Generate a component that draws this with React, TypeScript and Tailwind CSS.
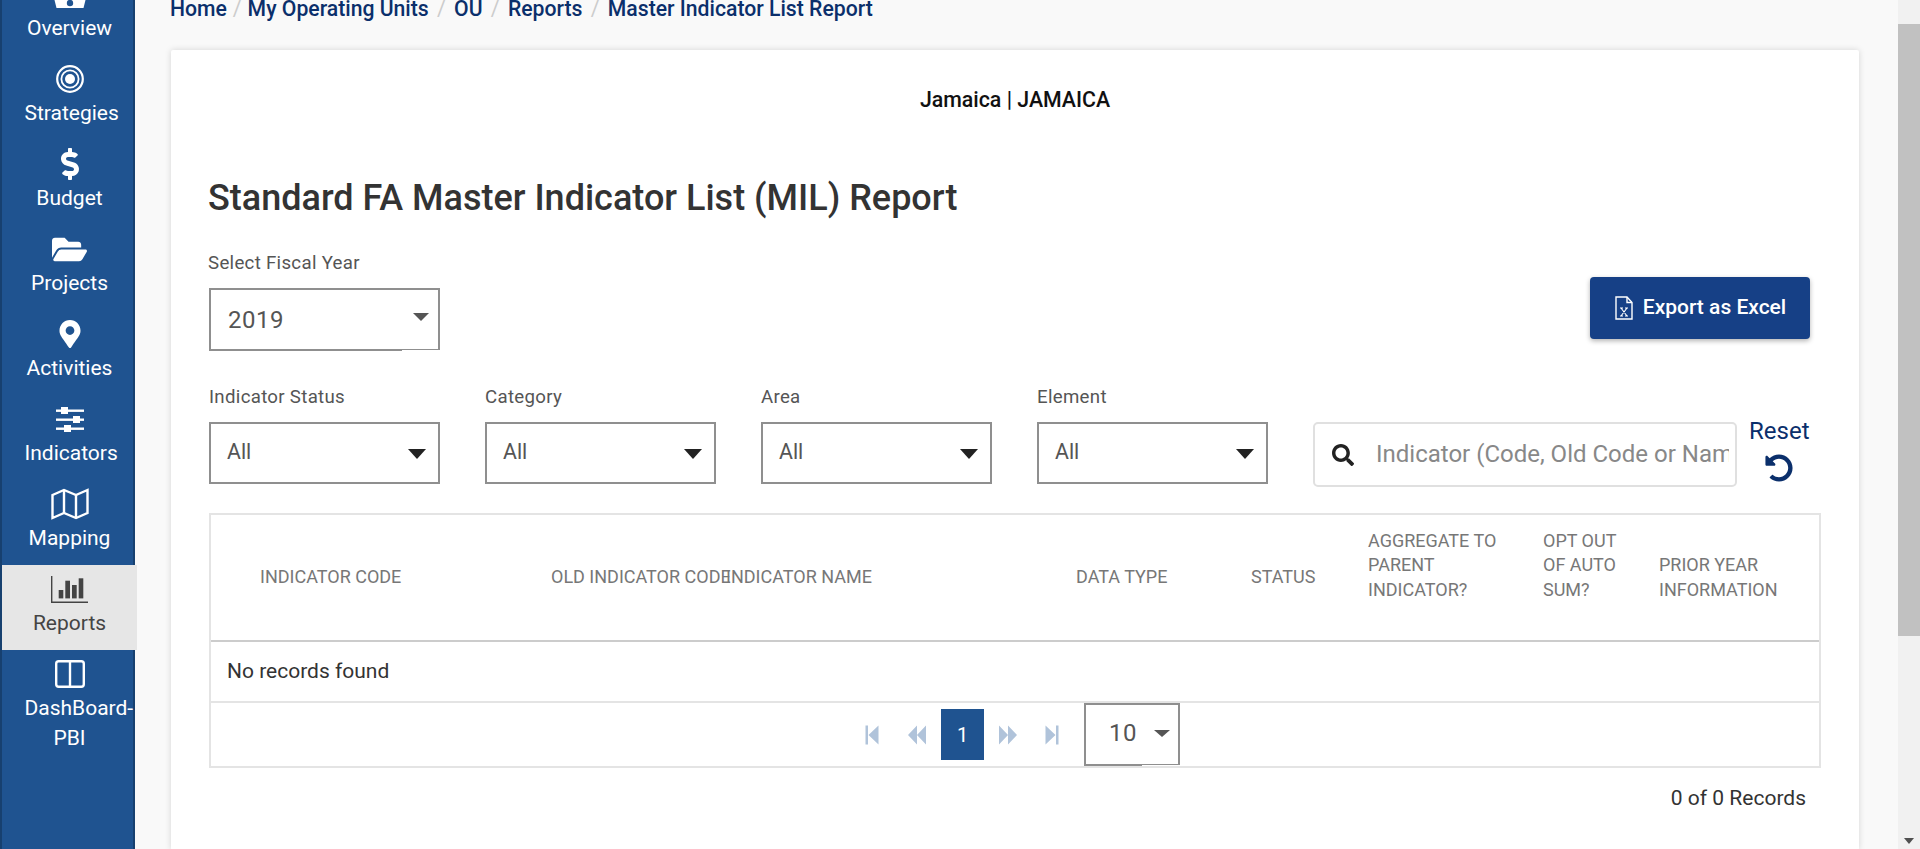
import { FaDollarSign, FaFolderOpen, FaMapMarkerAlt, FaSearch, FaUndoAlt } from "react-icons/fa";
import type { ReactNode } from "react";

const font = { fontFamily: "Roboto, sans-serif" };

const BullseyeIcon = () => (
  <svg viewBox="0 0 28 28" className="w-7 h-7" fill="none" stroke="white">
    <circle cx="14" cy="14" r="12.8" strokeWidth="2.2" />
    <circle cx="14" cy="14" r="8.6" strokeWidth="1.8" />
    <circle cx="14" cy="14" r="5" fill="white" stroke="none" />
  </svg>
);

const SlidersIcon = () => (
  <svg viewBox="0 0 28 25" className="w-7 h-[25px]" fill="white">
    <rect x="0" y="2.5" width="28" height="2.4" />
    <rect x="5" y="0" width="7" height="7" />
    <rect x="0" y="11.5" width="28" height="2.4" />
    <rect x="17" y="9" width="7" height="7" />
    <rect x="0" y="20.5" width="28" height="2.4" />
    <rect x="8" y="18" width="7" height="7" />
  </svg>
);

const MapIcon = () => (
  <svg viewBox="0 0 38 32" className="w-[38px] h-8" fill="none" stroke="white" strokeWidth="2.4">
    <path d="M1.5 7L13 2l12 5 11.5-5v23L25 30l-12-5L1.5 30z" />
    <path d="M13 2v23M25 7v23" />
  </svg>
);

const ChartIcon = () => (
  <svg viewBox="0 0 37 27" className="w-[37px] h-[27px]" fill="#444">
    <rect x="0" y="0" width="1.4" height="27" />
    <rect x="0" y="25.5" width="37" height="1.5" />
    <rect x="7.7" y="14" width="4.6" height="8.4" />
    <rect x="14.3" y="4.7" width="4.7" height="17.7" />
    <rect x="21" y="9" width="4.7" height="13.4" />
    <rect x="27.7" y="2.3" width="4.6" height="20.1" />
  </svg>
);

const ColumnsIcon = () => (
  <svg viewBox="0 0 30 28" className="w-[30px] h-7" fill="none" stroke="white" strokeWidth="2.4">
    <rect x="1.2" y="1.2" width="27.6" height="25.6" rx="2.5" />
    <line x1="15" y1="1.2" x2="15" y2="26.8" />
  </svg>
);

const OverviewIcon = () => (
  <svg viewBox="0 0 34 28" className="w-[34px] h-7" fill="white">
    <path d="M7 0h20l7 14-2 8-1.5 6H3.5L2 22 0 14z" />
    <circle cx="17" cy="23" r="3.2" fill="#1f5390" />
  </svg>
);

const ExcelIcon = () => (
  <svg viewBox="0 0 20 24" className="w-5 h-6" fill="none" stroke="white" strokeWidth="1.4">
    <path d="M2 1h11l5 5.5V23H2z" />
    <path d="M13 1v5.5h5" />
    <path d="M7 12l6 8M13 12l-6 8M6 12h3M11 12h3M6 20h3M11 20h3" strokeWidth="1.1" />
  </svg>
);

const NAV: { label: ReactNode; icon: ReactNode; active?: boolean }[] = [
  { label: "Overview", icon: <OverviewIcon /> },
  { label: "Strategies", icon: <BullseyeIcon /> },
  { label: "Budget", icon: <FaDollarSign className="text-[32px]" /> },
  { label: "Projects", icon: <FaFolderOpen className="text-[35px]" /> },
  { label: "Activities", icon: <FaMapMarkerAlt className="text-[28px]" /> },
  { label: "Indicators", icon: <SlidersIcon /> },
  { label: "Mapping", icon: <MapIcon /> },
  { label: "Reports", icon: <ChartIcon />, active: true },
  { label: "DashBoard-PBI", icon: <ColumnsIcon /> },
];

const Crumbs = ["Home", "My Operating Units", "OU", "Reports", "Master Indicator List Report"];

const Dropdown = ({ label }: { label: string }) => (
  <div className="w-[231px]">
    <div className="text-[18.67px] leading-[22px] tracking-[0.3px] text-[#555]">{label}</div>
    <div className="mt-[14px] h-[62px] border-2 border-[#8f8f8f] flex items-center justify-between pl-[16px] pr-[12px]">
      <span className="text-[21.33px] text-[#555] -mt-[2px]">All</span>
      <span className="w-0 h-0 border-x-[9px] border-x-transparent border-t-[10px] border-t-[#222] mt-[2px]" />
    </div>
  </div>
);

const Tri = ({ points }: { points: string }) => (
  <svg viewBox="0 0 20 20" className="w-5 h-5" fill="#b0c3da">
    <path d={points} />
  </svg>
);

export default function App() {
  return (
    <div className="flex h-[849px] overflow-hidden bg-[#f9f9f9]" style={font}>
      <aside className="w-[135px] shrink-0 bg-[#1f5390] border-x-2 border-[#17406f] -mt-[30px] text-white">
        {NAV.map((n, i) => (
          <div
            key={i}
            className={`relative w-[135px] h-[85px] flex flex-col items-center pt-[10px] text-center ${n.active ? "bg-[#e6e6e6] text-[#444]" : ""}`}
          >
            <div className="h-[28px] flex items-center justify-center">{n.icon}</div>
            <div className="text-[21px] leading-[30px] mt-[5px] w-[90px]">{n.label}</div>
          </div>
        ))}
      </aside>

      <main className="flex-1 min-w-0 pl-[36px] pr-[39px] -mt-[4px]">
        <nav className="h-[54px] -ml-[1px] flex items-start text-[21.2px] leading-[26px] font-medium text-[#0b2f6b]">
          {Crumbs.map((c, i) => (
            <span key={c} className="flex">
              {i > 0 && (
                <span className={`text-[#ccc] font-normal ${i === 1 ? "px-[6px]" : "px-[8.3px]"}`}>/</span>
              )}
              {c}
            </span>
          ))}
        </nav>

        <section className="bg-white shadow-[0_0_6px_rgba(0,0,0,0.15)] rounded-[2px] h-[800px] px-[38px] pt-[37px]">
          <div className="text-center text-[21.33px] leading-[26px] font-medium text-[#111]">Jamaica | JAMAICA</div>

          <h1 className="mt-[63px] -ml-[1px] text-[36px] leading-[44px] font-medium text-[#333]">
            Standard FA Master Indicator List (MIL) Report
          </h1>

          <div className="flex justify-between items-start mt-[32px]">
            <div>
              <div className="-ml-[1px] text-[18.67px] leading-[22px] tracking-[0.3px] text-[#555]">Select Fiscal Year</div>
              <div className="relative mt-[14px] w-[231px] h-[63px] border-2 border-[#8f8f8f] flex items-center justify-between pl-[17px] pr-[9px]">
                <span className="text-[24px] tracking-[0.5px] text-[#555]">2019</span>
                <span className="w-0 h-0 border-x-[8px] border-x-transparent border-t-[8px] border-t-[#555] -mt-[6px]" />
                <span className="absolute -bottom-[2px] -right-[2px] w-[38px] h-px bg-white" />
              </div>
            </div>
            <button className="mt-[25px] mr-[11px] w-[220px] h-[62px] bg-[#164086] rounded-[4px] shadow-[0_2px_5px_rgba(0,0,0,0.3)] text-white text-[21px] font-medium flex items-center justify-center gap-[9px]">
              <ExcelIcon />
              Export as Excel
            </button>
          </div>

          <div className="flex items-start mt-[35px]">
            <div className="flex gap-[45px]">
              {["Indicator Status", "Category", "Area", "Element"].map((l) => (
                <Dropdown key={l} label={l} />
              ))}
            </div>
            <div className="ml-[45px] mt-[36px] w-[424px] h-[65px] border-2 border-[#e0e0e0] rounded-[5px] flex items-center pl-[17px] pr-[6px]">
              <FaSearch className="text-[22px] text-[#222] shrink-0" />
              <div className="ml-[22px] -mt-[1px] text-[24px] text-[#888] whitespace-nowrap overflow-hidden">
                Indicator (Code, Old Code or Name)
              </div>
            </div>
            <div className="ml-[12px] mt-[31px] text-[#0b2f6b] flex flex-col items-center">
              <span className="text-[24px] leading-[28px]">Reset</span>
              <FaUndoAlt className="text-[28px] mt-[9px]" />
            </div>
          </div>

          <div className="mt-[26px] w-[1612px] border-2 border-[#e4e4e4]">
            <div className="h-[127px] grid grid-cols-[340px_175px_350px_175px_117px_175px_116px_1fr] items-center border-b-2 border-[#ccc] text-[18px] leading-[24.5px] text-[#777]">
              <div className="pl-[49px]">INDICATOR CODE</div>
              <div className="whitespace-nowrap">OLD INDICATOR CODE</div>
              <div>INDICATOR NAME</div>
              <div>DATA TYPE</div>
              <div>STATUS</div>
              <div className="pb-[24.5px]">AGGREGATE TO<br />PARENT<br />INDICATOR?</div>
              <div className="pb-[24.5px]">OPT OUT<br />OF AUTO<br />SUM?</div>
              <div>PRIOR YEAR<br />INFORMATION</div>
            </div>
            <div className="h-[61px] flex items-center pl-[16px] border-b-2 border-[#e4e4e4] text-[21px] text-[#333]">
              No records found
            </div>
            <div className="h-[63px] flex items-center justify-center pl-[12px]">
              <div className="flex items-center gap-[25px]">
                <Tri points="M3.5 .5H6v19H3.5zM16.5 .5v19L6.5 10z" />
                <Tri points="M10 .5v19L1 10zM19 .5v19L10 10z" />
              </div>
              <div className="mx-[14px] w-[43px] h-[51px] bg-[#1f5390] text-white flex items-center justify-center text-[20px]">1</div>
              <div className="flex items-center gap-[24px]">
                <Tri points="M1 .5v19l9-9.5zM10 .5v19l9-9.5z" />
                <Tri points="M3.5 .5v19l10-9.5zM14 .5h2.5v19H14z" />
              </div>
              <div className="relative ml-[22px] w-[96px] h-[63px] border-2 border-[#8f8f8f] flex items-center justify-between pl-[23px] pr-[8px]">
                <span className="text-[24px] tracking-[0.5px] text-[#555] -mt-[3px]">10</span>
                <span className="w-0 h-0 border-x-[8px] border-x-transparent border-t-[7px] border-t-[#555] -mt-[3px]" />
                <span className="absolute -bottom-[2px] -right-[2px] w-[38px] h-px bg-white" />
              </div>
            </div>
          </div>

          <div className="mt-[15px] w-[1597px] text-right text-[21px] text-[#333]">0 of 0 Records</div>
        </section>
      </main>

      <div className="w-[22px] shrink-0 bg-[#f1f1f1] flex flex-col">
        <div className="mt-[24px] h-[612px] bg-[#c1c1c1]" />
        <div className="mt-auto mb-[5px] mx-auto w-0 h-0 border-x-[5px] border-x-transparent border-t-[6px] border-t-[#505050]" />
      </div>
    </div>
  );
}
